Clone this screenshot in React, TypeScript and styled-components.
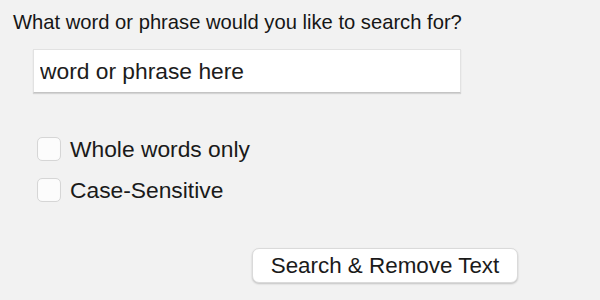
import styled, { createGlobalStyle } from 'styled-components';

const GlobalStyle = createGlobalStyle`
    html, body {
        margin: 0;
        padding: 0;
        background: #f2f2f2;
    }
    body {
        font-family: "Liberation Sans", Arial, Helvetica, sans-serif;
        color: #1a1a1a;
    }
`;

const App = () => {
    return (<>
        <GlobalStyle />
        <Panel>
            <Prompt>What word or phrase would you like to search for?</Prompt>
            <SearchInput type="text" placeholder="word or phrase here" />
            <Options>
                <Option>
                    <Box type="checkbox" />
                    <Label>Whole words only</Label>
                </Option>
                <Option>
                    <Box type="checkbox" />
                    <Label>Case-Sensitive</Label>
                </Option>
            </Options>
            <Actions>
                <Button>Search &amp; Remove Text</Button>
            </Actions>
        </Panel>
    </>)
}

const Panel = styled.div`
    width: 600px;
    height: 300px;
    box-sizing: border-box;
    padding: 10px 0 0 13px;
    display: flex;
    flex-direction: column;
    align-items: flex-start;
`;

const Prompt = styled.div`
    font-size: 20.2px;
    line-height: 24px;
    color: #161616;
`;

const SearchInput = styled.input`
    margin: 15px 0 0 20px;
    width: 428px;
    height: 44px;
    box-sizing: border-box;
    padding: 0 0 0 6px;
    border: 1px solid #e2e2e2;
    border-bottom: 1px solid #c4c4c4;
    box-shadow: 0 1px 1px rgba(0, 0, 0, 0.12);
    background: #ffffff;
    font-family: inherit;
    font-size: 22.8px;
    outline: none;
    &::placeholder {
        color: #1c1c1c;
        opacity: 1;
    }
`;

const Options = styled.div`
    margin: 44px 0 0 24px;
    display: flex;
    flex-direction: column;
    gap: 17px;
`;

const Option = styled.label`
    display: flex;
    align-items: center;
    gap: 9px;
    height: 24px;
`;

const Box = styled.input`
    appearance: none;
    margin: 0;
    width: 24px;
    height: 24px;
    box-sizing: border-box;
    border: 1px solid #d6d6d6;
    border-radius: 5px;
    background: #fcfcfc;
    box-shadow: inset 0 0 1px rgba(0, 0, 0, 0.06);
`;

const Label = styled.span`
    font-size: 22.8px;
    line-height: 24px;
    color: #1a1a1a;
`;

const Actions = styled.div`
    margin: 46px 0 0 239px;
`;

const Button = styled.button`
    width: 266px;
    height: 35px;
    box-sizing: border-box;
    padding: 0;
    border: 1px solid #dadada;
    border-radius: 7px;
    background: #ffffff;
    box-shadow: 0 1px 2px rgba(0, 0, 0, 0.2);
    font-family: inherit;
    font-size: 22.4px;
    color: #1a1a1a;
`;

export default App;
